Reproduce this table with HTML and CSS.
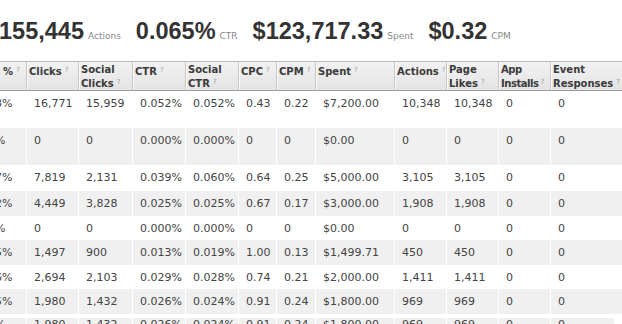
FILE: index.html
```html
<!DOCTYPE html>
<html>
<head>
<meta charset="utf-8">
<link rel="stylesheet" href="styles.css">
</head>
<body>
<div class="page">
  <div class="stats">
    <div class="stat"><span class="stat-value">155,445</span><span class="stat-label">Actions</span></div>
    <div class="stat"><span class="stat-value">0.065%</span><span class="stat-label">CTR</span></div>
    <div class="stat"><span class="stat-value">$123,717.33</span><span class="stat-label">Spent</span></div>
    <div class="stat"><span class="stat-value">$0.32</span><span class="stat-label">CPM</span></div>
  </div>

  <table class="grid">
    <colgroup>
      <col class="w-first"><col class="w-52"><col class="w-54"><col class="w-53"><col class="w-53"><col class="w-38"><col class="w-39"><col class="w-79"><col class="w-52"><col class="w-52"><col class="w-52"><col class="w-80">
    </colgroup>
    <thead>
      <tr>
        <th class="first">Social <span class="nw">%<span class="q">?</span></span></th>
        <th><span class="nw">Clicks<span class="q">?</span></span></th>
        <th>Social <span class="nw">Clicks<span class="q">?</span></span></th>
        <th><span class="nw">CTR<span class="q">?</span></span></th>
        <th>Social <span class="nw">CTR<span class="q">?</span></span></th>
        <th><span class="nw">CPC<span class="q">?</span></span></th>
        <th><span class="nw">CPM<span class="q">?</span></span></th>
        <th><span class="nw">Spent<span class="q">?</span></span></th>
        <th><span class="nw">Actions<span class="q">?</span></span></th>
        <th>Page <span class="nw">Likes<span class="q">?</span></span></th>
        <th class="tight">App <span class="nw">Installs<span class="q">?</span></span></th>
        <th>Event <span class="nw">Responses<span class="q">?</span></span></th>
      </tr>
    </thead>
    <tbody>
      <tr class="tall">
        <td class="first">18%</td><td>16,771</td><td>15,959</td><td>0.052%</td><td>0.052%</td><td>0.43</td><td>0.22</td><td>$7,200.00</td><td>10,348</td><td>10,348</td><td>0</td><td>0</td>
      </tr>
      <tr class="tall">
        <td class="first">0%</td><td>0</td><td>0</td><td>0.000%</td><td>0.000%</td><td>0</td><td>0</td><td>$0.00</td><td>0</td><td>0</td><td>0</td><td>0</td>
      </tr>
      <tr class="mid">
        <td class="first">27%</td><td>7,819</td><td>2,131</td><td>0.039%</td><td>0.060%</td><td>0.64</td><td>0.25</td><td>$5,000.00</td><td>3,105</td><td>3,105</td><td>0</td><td>0</td>
      </tr>
      <tr class="short">
        <td class="first">12%</td><td>4,449</td><td>3,828</td><td>0.025%</td><td>0.025%</td><td>0.67</td><td>0.17</td><td>$3,000.00</td><td>1,908</td><td>1,908</td><td>0</td><td>0</td>
      </tr>
      <tr class="short">
        <td class="first">0%</td><td>0</td><td>0</td><td>0.000%</td><td>0.000%</td><td>0</td><td>0</td><td>$0.00</td><td>0</td><td>0</td><td>0</td><td>0</td>
      </tr>
      <tr class="short">
        <td class="first">15%</td><td>1,497</td><td>900</td><td>0.013%</td><td>0.019%</td><td>1.00</td><td>0.13</td><td>$1,499.71</td><td>450</td><td>450</td><td>0</td><td>0</td>
      </tr>
      <tr class="short">
        <td class="first">16%</td><td>2,694</td><td>2,103</td><td>0.029%</td><td>0.028%</td><td>0.74</td><td>0.21</td><td>$2,000.00</td><td>1,411</td><td>1,411</td><td>0</td><td>0</td>
      </tr>
      <tr class="short">
        <td class="first">15%</td><td>1,980</td><td>1,432</td><td>0.026%</td><td>0.024%</td><td>0.91</td><td>0.24</td><td>$1,800.00</td><td>969</td><td>969</td><td>0</td><td>0</td>
      </tr>
    </tbody>
  </table>

  <table class="grid footer">
    <colgroup>
      <col class="w-first"><col class="w-52"><col class="w-54"><col class="w-53"><col class="w-53"><col class="w-38"><col class="w-39"><col class="w-79"><col class="w-52"><col class="w-52"><col class="w-52"><col class="w-64">
    </colgroup>
    <tbody>
      <tr>
        <td class="first">15%</td><td>1,980</td><td>1,432</td><td>0.026%</td><td>0.024%</td><td>0.91</td><td>0.24</td><td>$1,800.00</td><td>969</td><td>969</td><td>0</td><td>0</td>
      </tr>
    </tbody>
  </table>
</div>
</body>
</html>
```

FILE: styles.css
```css
html, body {
  margin: 0;
  padding: 0;
  overflow: hidden;
  background: #fff;
}

body {
  font-family: "DejaVu Sans", "Liberation Sans", sans-serif;
  color: #444;
}

.page {
  margin-left: -40px;
  padding-top: 17px;
}

/* summary stats */
.stats {
  display: flex;
  align-items: baseline;
  gap: 15px;
  height: 28px;
  line-height: 28px;
  margin-left: 39px;
}

.stat {
  display: flex;
  align-items: baseline;
  gap: 4px;
}

.stat-value {
  font-family: "Liberation Sans", Arial, sans-serif;
  font-size: 23.5px;
  font-weight: bold;
  color: #333;
}

.stat-label {
  font-family: "DejaVu Sans", sans-serif;
  font-size: 9px;
  color: #888;
}

/* table */
.grid {
  border-collapse: separate;
  border-spacing: 0;
  table-layout: fixed;
  width: 671px;
  margin-top: 16px;
}

.w-first { width: 67px; }
.w-38 { width: 38px; }
.w-39 { width: 39px; }
.w-52 { width: 52px; }
.w-53 { width: 53px; }
.w-54 { width: 54px; }
.w-64 { width: 64px; }
.w-79 { width: 79px; }
.w-80 { width: 80px; }

.grid th {
  font-size: 10px;
  font-weight: bold;
  line-height: 12px;
  color: #3a3a3a;
  text-align: left;
  vertical-align: top;
  padding: 2px 0 0 2px;
  background: linear-gradient(#f2f2f2, #e4e4e4);
  border-top: 1px solid #b8b8b8;
  border-bottom: 1px solid #9c9c9c;
  border-right: 1px solid #c6c6c6;
  box-shadow: inset 1px 0 0 #f9f9f9;
  overflow: hidden;
}

.grid th.first {
  padding-left: 6px;
  white-space: nowrap;
}

.grid th.tight {
  letter-spacing: -0.45px;
}

.grid th.tight .q {
  margin-left: 2px;
}

.nw {
  white-space: nowrap;
}

.q {
  font-size: 7px;
  font-weight: normal;
  color: #9a9a9a;
  vertical-align: 3px;
  margin-left: 3px;
}

.grid td {
  font-size: 11px;
  line-height: 14px;
  vertical-align: top;
  padding: 6px 2px 0 7px;
  border-right: 1px solid #fff;
  white-space: nowrap;
  overflow: hidden;
}

.grid td.first {
  padding-left: 28px;
}

.grid tbody tr:nth-child(even) td {
  background: #f0f0f0;
}

.grid tr.tall { height: 37px; }
.grid tr.mid { height: 26px; }
.grid tr.short { height: 24.6px; }

/* detached totals row */
.grid.footer {
  width: 655px;
  margin-top: 4px;
}

.grid.footer td {
  background: #f0f0f0;
  padding-top: 0;
  height: 20px;
}

.grid.footer td.first {
  padding-left: 21px;
}
```
